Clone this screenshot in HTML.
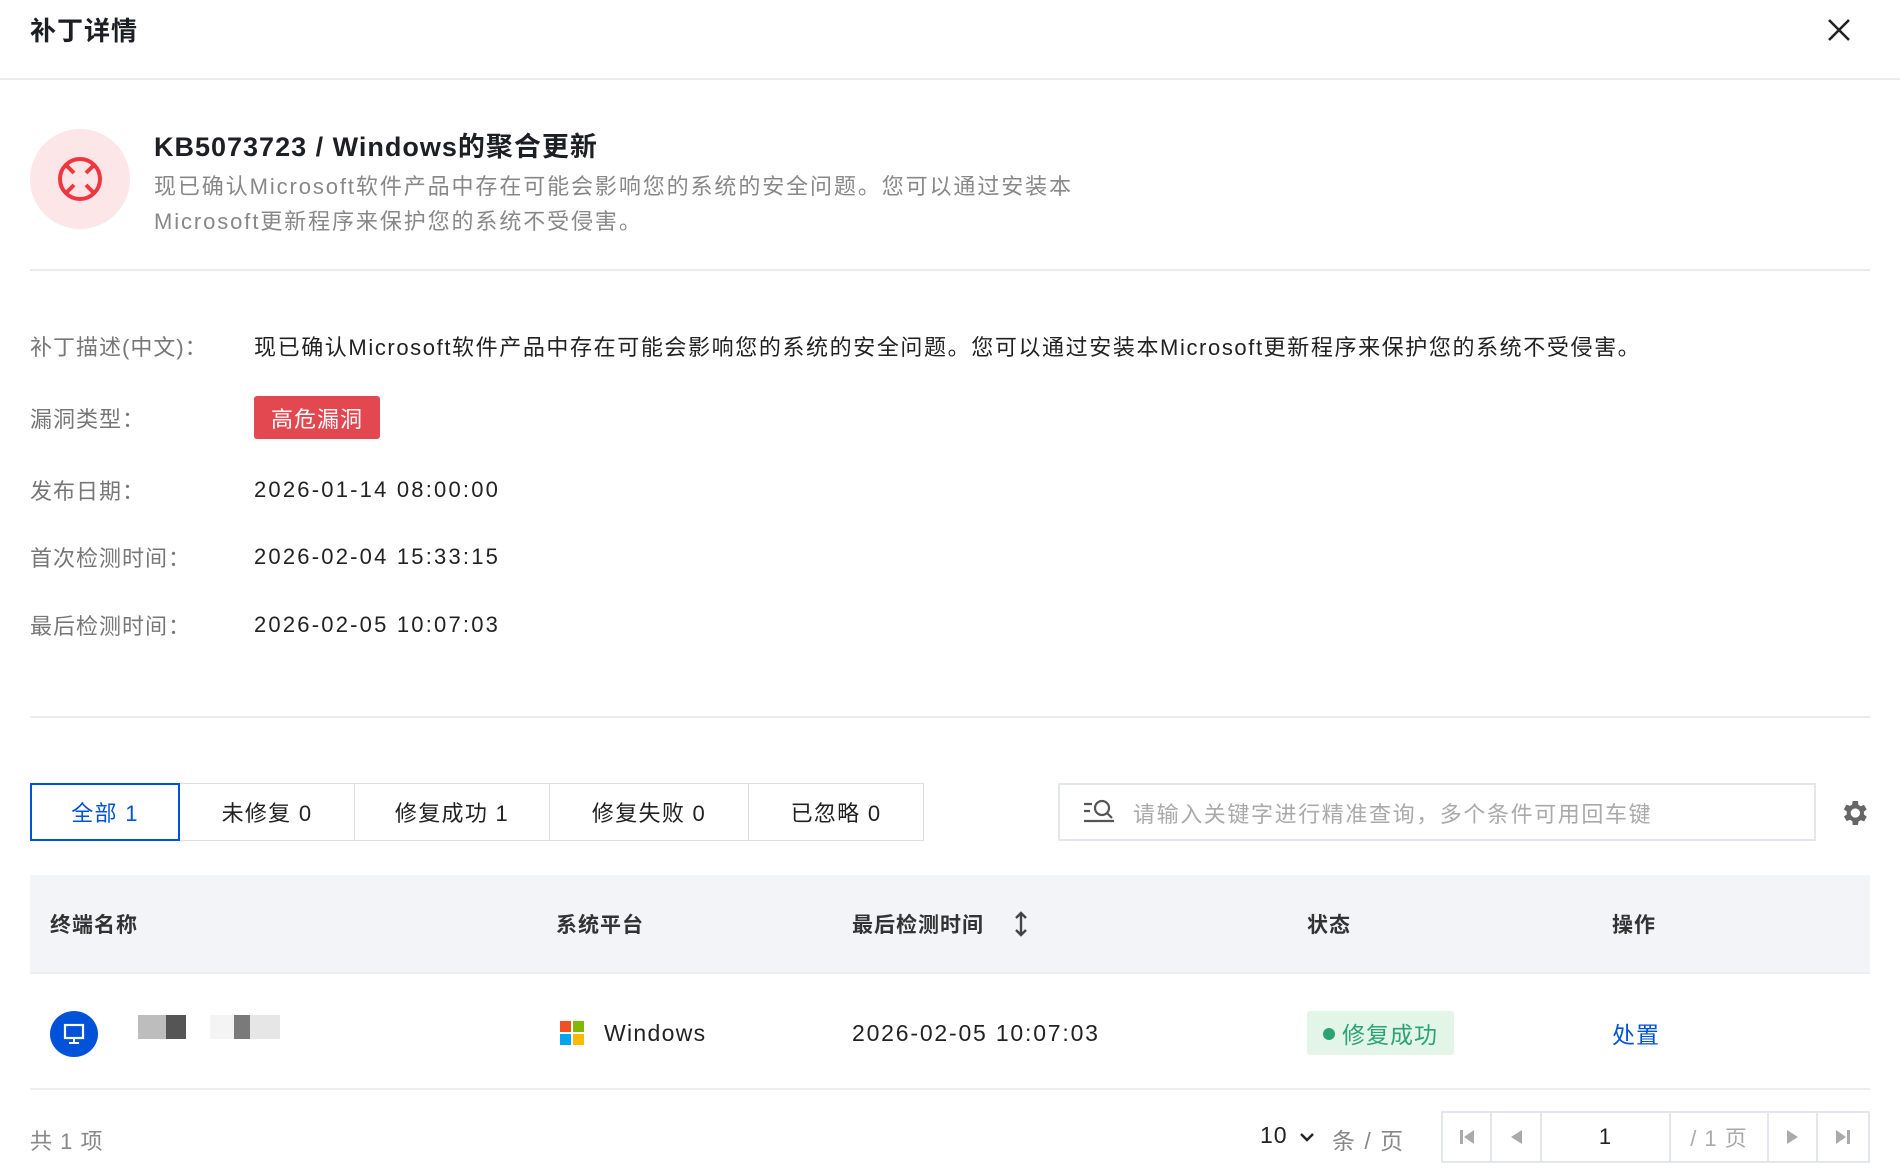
<!DOCTYPE html>
<html><head><meta charset="utf-8"><style>
*{box-sizing:border-box;margin:0;padding:0}
body{width:1900px;height:1176px;background:#fff;font-family:"Liberation Sans","Noto Sans CJK SC",sans-serif;color:#1d1f24;position:relative;overflow:hidden;letter-spacing:1px}
.a{position:absolute;white-space:nowrap}
.lbl{color:#777;font-size:22px;left:30px}
.val{left:254px;font-size:22px;color:#222}
.num{letter-spacing:2.2px}
.tab{position:absolute;top:783px;height:58px;border:1px solid #dcdfe6;font-size:22px;display:flex;align-items:center;justify-content:center;color:#222;letter-spacing:1.3px}
.th{font-size:21px;font-weight:bold;color:#333;top:909px}
.pg{position:absolute;top:1111px;height:52px;border:2px solid #e3e6ec;display:flex;align-items:center;justify-content:center;color:#aaa;font-size:22px}
</style></head><body>
<div class="a" style="left:30px;top:11px;font-size:26px;font-weight:bold">补丁详情</div>
<svg class="a" style="left:1827px;top:18px" width="24" height="24"><path d="M2 2L22 22M22 2L2 22" stroke="#222" stroke-width="2.6"/></svg>
<div class="a" style="left:0;top:78px;width:1900px;height:2px;background:#e8e9ec"></div>
<div class="a" style="left:30px;top:129px;width:100px;height:100px;border-radius:50%;background:#fde6e7"></div>
<svg class="a" style="left:55px;top:154px" width="50" height="50"><circle cx="25" cy="25" r="20" fill="none" stroke="#f0363f" stroke-width="4"/><path d="M11 11L19 19M39 11L31 19M11 39L19 31M39 39L31 31" stroke="#f0363f" stroke-width="4"/></svg>
<div class="a" style="left:154px;top:125px;font-size:27px;font-weight:bold;letter-spacing:1px">KB5073723 / Windows的聚合更新</div>
<div class="a" style="left:154px;top:169px;font-size:22px;color:#888;letter-spacing:1.9px">现已确认Microsoft软件产品中存在可能会影响您的系统的安全问题。您可以通过安装本</div>
<div class="a" style="left:154px;top:204px;font-size:22px;color:#888;letter-spacing:1.9px">Microsoft更新程序来保护您的系统不受侵害。</div>
<div class="a" style="left:30px;top:269px;width:1840px;height:2px;background:#eaebee"></div>
<div class="a lbl" style="top:330px">补丁描述(中文)：</div>
<div class="a val" style="top:330px;letter-spacing:1.6px">现已确认Microsoft软件产品中存在可能会影响您的系统的安全问题。您可以通过安装本Microsoft更新程序来保护您的系统不受侵害。</div>
<div class="a lbl" style="top:402px">漏洞类型：</div>
<div class="a" style="left:254px;top:396px;width:126px;height:43px;background:#e3474f;border-radius:3px;color:#fff;font-size:22px;display:flex;align-items:center;justify-content:center">高危漏洞</div>
<div class="a lbl" style="top:474px">发布日期：</div><div class="a val num" style="top:477px">2026-01-14 08:00:00</div>
<div class="a lbl" style="top:541px">首次检测时间：</div><div class="a val num" style="top:544px">2026-02-04 15:33:15</div>
<div class="a lbl" style="top:609px">最后检测时间：</div><div class="a val num" style="top:612px">2026-02-05 10:07:03</div>
<div class="a" style="left:30px;top:716px;width:1840px;height:2px;background:#eaebee"></div>
<div class="tab" style="left:30px;width:150px;border:2px solid #0052d9;color:#0052d9;z-index:2">全部 1</div>
<div class="tab" style="left:179px;width:176px">未修复 0</div>
<div class="tab" style="left:354px;width:196px">修复成功 1</div>
<div class="tab" style="left:549px;width:200px">修复失败 0</div>
<div class="tab" style="left:748px;width:176px">已忽略 0</div>
<div class="a" style="left:1058px;top:783px;width:758px;height:58px;border:2px solid #e3e6ec"></div>
<svg class="a" style="left:1082px;top:797px" width="34" height="30"><path d="M2 7H10M2 14H8M2 24H32" stroke="#555" stroke-width="2.2" fill="none"/><circle cx="20" cy="11" r="7" fill="none" stroke="#555" stroke-width="2.2"/><path d="M25 16L30 21" stroke="#555" stroke-width="2.2"/></svg>
<div class="a" style="left:1133px;top:797px;font-size:22px;color:#aaa;letter-spacing:1.6px">请输入关键字进行精准查询，多个条件可用回车键</div>
<svg class="a" style="left:1838px;top:797px" width="32" height="32" viewBox="0 0 24 24"><path fill="#666" d="M19.4 13a7.5 7.5 0 000-2l2.1-1.6-2-3.5-2.5 1a7.6 7.6 0 00-1.7-1L15 3h-4l-.4 2.7a7.6 7.6 0 00-1.7 1l-2.5-1-2 3.5L6.6 11a7.5 7.5 0 000 2l-2.1 1.6 2 3.5 2.5-1a7.6 7.6 0 001.7 1L11 21h4l.4-2.7a7.6 7.6 0 001.7-1l2.5 1 2-3.5zM13 15.5A3.5 3.5 0 1113 8.5a3.5 3.5 0 010 7z"/></svg>
<div class="a" style="left:30px;top:875px;width:1840px;height:99px;background:#f3f4f8;border-bottom:2px solid #eceef2"></div>
<div class="a th" style="left:50px">终端名称</div>
<div class="a th" style="left:556px">系统平台</div>
<div class="a th" style="left:852px">最后检测时间</div>
<svg class="a" style="left:1014px;top:911px" width="14" height="26"><path d="M7 2V24M2 7L7 2L12 7M2 19L7 24L12 19" stroke="#444" stroke-width="2.4" fill="none"/></svg>
<div class="a th" style="left:1307px">状态</div>
<div class="a th" style="left:1612px">操作</div>
<div class="a" style="left:50px;top:1011px;width:48px;height:46px;border-radius:50%;background:#0052d9"></div>
<svg class="a" style="left:63px;top:1023px" width="22" height="22"><rect x="2" y="2" width="18" height="13" fill="none" stroke="#fff" stroke-width="2.2"/><path d="M11 15V19M6 20H16" stroke="#fff" stroke-width="2"/></svg>
<div class="a" style="left:138px;top:1015px;width:28px;height:24px;background:#bdbdbd"></div>
<div class="a" style="left:166px;top:1015px;width:20px;height:24px;background:#555"></div>
<div class="a" style="left:210px;top:1015px;width:24px;height:24px;background:#f4f4f4"></div>
<div class="a" style="left:234px;top:1015px;width:16px;height:24px;background:#7a7a7a"></div>
<div class="a" style="left:250px;top:1015px;width:30px;height:24px;background:#e6e6e6"></div>
<svg class="a" style="left:560px;top:1021px" width="24" height="24"><rect x="0" y="0" width="11" height="11" fill="#f25022"/><rect x="13" y="0" width="11" height="11" fill="#7fba00"/><rect x="0" y="13" width="11" height="11" fill="#00a4ef"/><rect x="13" y="13" width="11" height="11" fill="#ffb900"/></svg>
<div class="a" style="left:604px;top:1020px;font-size:23px;color:#222;letter-spacing:1.3px">Windows</div>
<div class="a num" style="left:852px;top:1020px;font-size:23px;color:#222;letter-spacing:1.8px">2026-02-05 10:07:03</div>
<div class="a" style="left:1307px;top:1011px;width:147px;height:44px;background:#e3f5e6;border-radius:3px"></div>
<div class="a" style="left:1323px;top:1028px;width:12px;height:12px;border-radius:50%;background:#2ba471"></div>
<div class="a" style="left:1342px;top:1016px;font-size:23px;color:#2ba471">修复成功</div>
<div class="a" style="left:1612px;top:1016px;font-size:23px;color:#0052d9">处置</div>
<div class="a" style="left:30px;top:1088px;width:1840px;height:2px;background:#eceef2"></div>
<div class="a" style="left:30px;top:1124px;font-size:22px;color:#888;letter-spacing:1px">共 1 项</div>
<div class="a" style="left:1260px;top:1122px;font-size:23px;color:#222">10</div>
<svg class="a" style="left:1299px;top:1131px" width="16" height="12"><path d="M2 3L8 9L14 3" stroke="#222" stroke-width="2.4" fill="none"/></svg>
<div class="a" style="left:1332px;top:1122px;font-size:23px;color:#888;letter-spacing:1.5px">条 / 页</div>
<div class="pg" style="left:1441px;width:51px"><svg width="16" height="18"><rect x="1" y="2" width="3" height="14" fill="#aaa"/><path d="M15 2V16L5 9Z" fill="#aaa"/></svg></div>
<div class="pg" style="left:1490px;width:52px"><svg width="14" height="18"><path d="M13 2V16L2 9Z" fill="#aaa"/></svg></div>
<div class="pg" style="left:1540px;width:131px;color:#222">1</div>
<div class="pg" style="left:1669px;width:100px">/ 1 页</div>
<div class="pg" style="left:1767px;width:51px"><svg width="14" height="18"><path d="M1 2V16L12 9Z" fill="#aaa"/></svg></div>
<div class="pg" style="left:1816px;width:54px"><svg width="16" height="18"><path d="M1 2V16L11 9Z" fill="#aaa"/><rect x="12" y="2" width="3" height="14" fill="#aaa"/></svg></div>
</body></html>
